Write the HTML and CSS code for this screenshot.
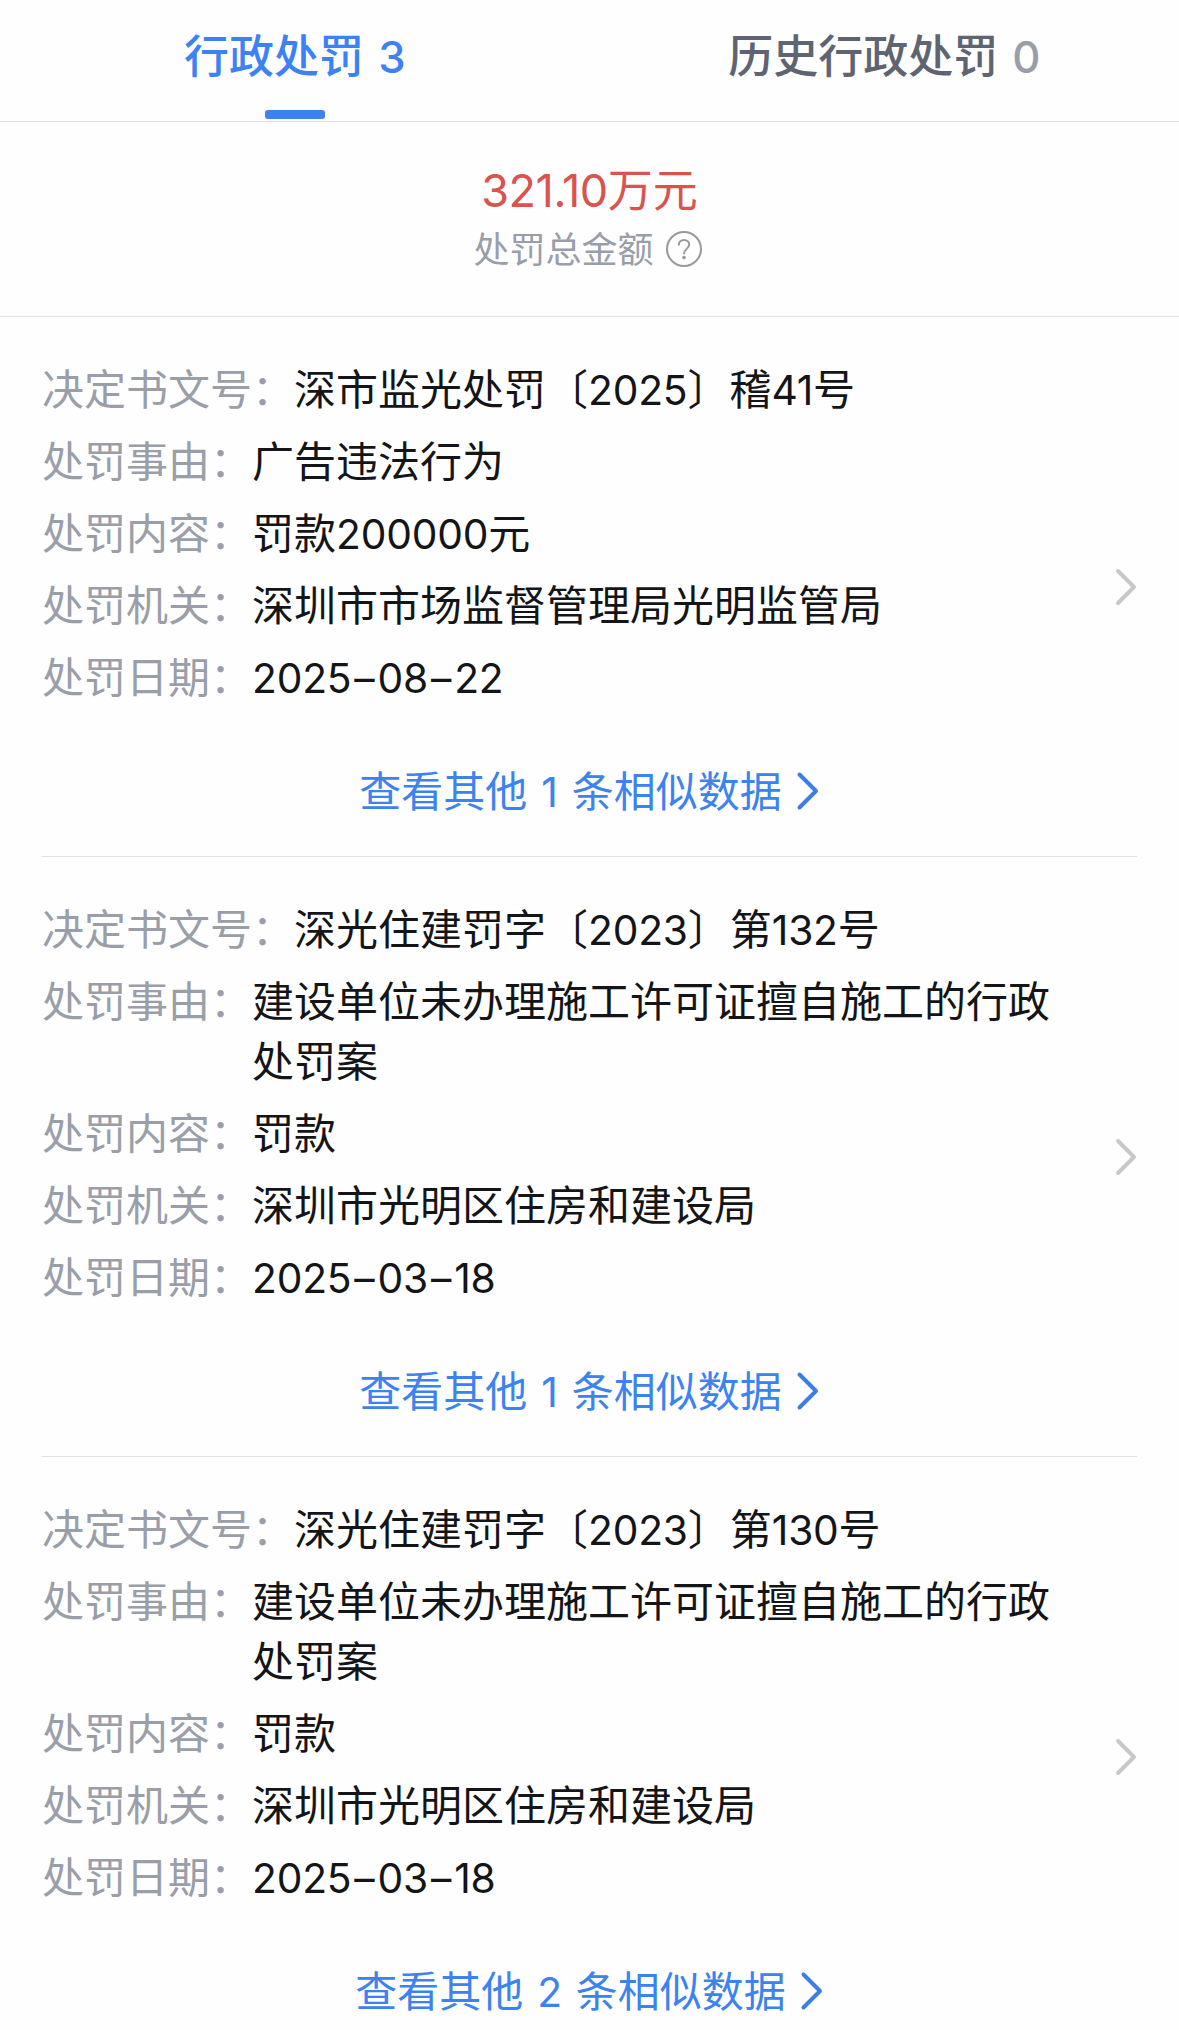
FILE: index.html
```
<!DOCTYPE html>
<html lang="zh-CN">
<head>
  <meta charset="UTF-8">
  <meta name="viewport" content="width=device-width, initial-scale=1.0">
  <title>行政处罚</title>
  <link rel="stylesheet" href="styles.css">
</head>
<body>
  <div class="page">
    <div class="tabs">
      <div class="tab active">行政处罚 <span class="num">3</span></div>
      <div class="tab">历史行政处罚 <span class="num count">0</span></div>
    </div>

    <div class="total">
      <p class="money"><span class="num">321.10</span>万元</p>
      <div class="tip">
        <span>处罚总金额</span>
        <svg class="help" viewBox="0 0 36 36">
          <circle cx="18" cy="18" r="17"/>
          <path d="M12.8 13.8c0-3 2.2-4.9 5.2-4.9s5.2 1.9 5.2 4.7c0 4-5.2 4.6-5.2 9"/>
          <circle class="dot" cx="18" cy="26.6" r="1.8"/>
        </svg>
      </div>
    </div>

    <div class="list">
      <div class="item">
        <dl>
          <div class="row"><dt>决定书文号：</dt><dd>深市监光处罚〔<span class="num">2025</span>〕稽<span class="num">41</span>号</dd></div>
          <div class="row"><dt>处罚事由：</dt><dd>广告违法行为</dd></div>
          <div class="row"><dt>处罚内容：</dt><dd>罚款<span class="num">200000</span>元</dd></div>
          <div class="row"><dt>处罚机关：</dt><dd>深圳市市场监督管理局光明监管局</dd></div>
          <div class="row"><dt>处罚日期：</dt><dd><span class="num">2025<i>–</i>08<i>–</i>22</span></dd></div>
        </dl>
        <div class="more">
          <span>查看其他<span class="num n">1</span>条相似数据</span>
          <svg viewBox="0 0 24 40"><path d="M3.5 3.5L20 20L3.5 36.5"/></svg>
        </div>
        <svg class="arrow" viewBox="0 0 24 40"><path d="M4 4L20 20L4 36"/></svg>
      </div>

      <div class="item">
        <dl>
          <div class="row"><dt>决定书文号：</dt><dd>深光住建罚字〔<span class="num">2023</span>〕第<span class="num">132</span>号</dd></div>
          <div class="row"><dt>处罚事由：</dt><dd>建设单位未办理施工许可证擅自施工的行政处罚案</dd></div>
          <div class="row"><dt>处罚内容：</dt><dd>罚款</dd></div>
          <div class="row"><dt>处罚机关：</dt><dd>深圳市光明区住房和建设局</dd></div>
          <div class="row"><dt>处罚日期：</dt><dd><span class="num">2025<i>–</i>03<i>–</i>18</span></dd></div>
        </dl>
        <div class="more">
          <span>查看其他<span class="num n">1</span>条相似数据</span>
          <svg viewBox="0 0 24 40"><path d="M3.5 3.5L20 20L3.5 36.5"/></svg>
        </div>
        <svg class="arrow" viewBox="0 0 24 40"><path d="M4 4L20 20L4 36"/></svg>
      </div>

      <div class="item">
        <dl>
          <div class="row"><dt>决定书文号：</dt><dd>深光住建罚字〔<span class="num">2023</span>〕第<span class="num">130</span>号</dd></div>
          <div class="row"><dt>处罚事由：</dt><dd>建设单位未办理施工许可证擅自施工的行政处罚案</dd></div>
          <div class="row"><dt>处罚内容：</dt><dd>罚款</dd></div>
          <div class="row"><dt>处罚机关：</dt><dd>深圳市光明区住房和建设局</dd></div>
          <div class="row"><dt>处罚日期：</dt><dd><span class="num">2025<i>–</i>03<i>–</i>18</span></dd></div>
        </dl>
        <div class="more">
          <span>查看其他<span class="num n">2</span>条相似数据</span>
          <svg viewBox="0 0 24 40"><path d="M3.5 3.5L20 20L3.5 36.5"/></svg>
        </div>
        <svg class="arrow" viewBox="0 0 24 40"><path d="M4 4L20 20L4 36"/></svg>
      </div>
    </div>
  </div>
</body>
</html>
```
FILE: styles.css
```
* {
  margin: 0;
  padding: 0;
  box-sizing: border-box;
}
body {
  background-color: #fefefe;
  font-family: "Noto Sans CJK SC", sans-serif;
  font-size: 42px;
  line-height: 60px;
  color: #141518;
}
svg {
  fill: none;
  stroke-linecap: round;
  stroke-linejoin: round;
}
.page {
  height: 2030px;
  overflow: hidden;
}
.num {
  font-family: Inter, sans-serif;
  font-size: 0.97em;
  font-weight: 400;
  letter-spacing: -0.005em;
  line-height: 1;
}
/* 日期中的横线 */
.num i {
  margin: 0 3px;
  font-style: normal;
}

/* 顶部标签 */
.tabs {
  display: flex;
  height: 122px;
  border-bottom: 1px solid #e0e1e3;
}
.tab {
  position: relative;
  flex: 1;
  padding-top: 24px;
  text-align: center;
  font-size: 45px;
  font-weight: 500;
  color: #5f6472;
}
.tab .num {
  margin-left: 4px;
  font-weight: 500;
}
.tab .count {
  color: #999ea9;
}
.tab.active {
  color: #3c82f4;
}
.tab.active::after {
  content: "";
  position: absolute;
  left: 50%;
  bottom: 2px;
  width: 60px;
  height: 9px;
  margin-left: -30px;
  border-radius: 3px;
  background-color: #3c82f6;
}

/* 处罚总金额 */
.total {
  height: 195px;
  padding-top: 36px;
  border-bottom: 1px solid #e0e1e3;
  text-align: center;
}
.money {
  font-size: 45px;
  color: #d9534f;
}
.money .num {
  font-size: 1em;
  letter-spacing: -0.01em;
}
.tip {
  display: flex;
  justify-content: center;
  align-items: center;
  gap: 12px;
  padding-right: 4px;
  font-size: 36px;
  line-height: 58px;
  color: #999ea9;
}
.help {
  width: 36px;
  height: 36px;
  margin-top: 4px;
  stroke: #999;
  stroke-width: 2;
}
.help .dot {
  fill: #999;
  stroke: none;
}

/* 列表 */
.list {
  padding: 0 42px;
}
.item {
  position: relative;
  height: 540px;
  padding-top: 40px;
  border-bottom: 1px solid #e0e1e3;
}
.item + .item {
  height: 600px;
}
.item dl {
  display: flex;
  flex-direction: column;
  gap: 12px;
  padding-right: 80px;
}
.row {
  display: flex;
}
.row dt {
  flex-shrink: 0;
  color: #999ea9;
}
.more {
  display: flex;
  justify-content: center;
  align-items: center;
  margin-top: 54px;
  color: #3c82f0;
}
.more .n {
  margin: 0 14px;
}
.more svg {
  width: 24px;
  height: 40px;
  margin-top: 4px;
  margin-left: 14px;
  stroke: #3c7ee6;
  stroke-width: 4;
}
.arrow {
  position: absolute;
  right: -1px;
  top: 50%;
  width: 24px;
  height: 40px;
  margin-top: -20px;
  stroke: #c8c8c8;
  stroke-width: 4;
}
```
